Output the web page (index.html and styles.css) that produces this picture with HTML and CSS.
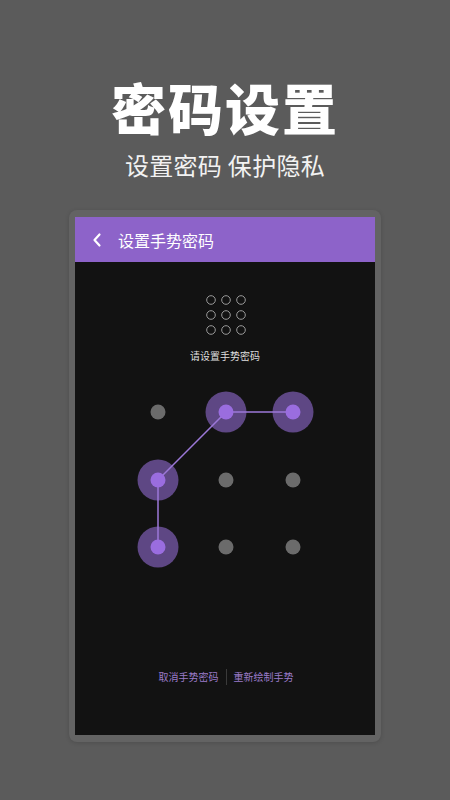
FILE: index.html
```html
<!DOCTYPE html>
<html lang="zh">
<head>
<meta charset="utf-8">
<link rel="stylesheet" href="styles.css">
</head>
<body>
<div class="page">
  <h1 class="title">密码设置</h1>
  <p class="subtitle">设置密码 保护隐私</p>
  <div class="frame">
    <div class="screen">
      <div class="appbar">
        <svg class="back" width="12" height="16" viewBox="0 0 12 16"><path d="M8.5 2.5 L3.5 8 L8.5 13.5" fill="none" stroke="#fff" stroke-width="2.2" stroke-linecap="round" stroke-linejoin="round"/></svg>
        <span class="appbar-title">设置手势密码</span>
      </div>
      <div class="content">
        <svg class="mini" width="40" height="40" viewBox="0 0 40 40">
          <g fill="none" stroke="#9a9a9a" stroke-width="1">
            <circle cx="5" cy="5" r="4.3"/><circle cx="20" cy="5" r="4.3"/><circle cx="35" cy="5" r="4.3"/>
            <circle cx="5" cy="20" r="4.3"/><circle cx="20" cy="20" r="4.3"/><circle cx="35" cy="20" r="4.3"/>
            <circle cx="5" cy="35" r="4.3"/><circle cx="20" cy="35" r="4.3"/><circle cx="35" cy="35" r="4.3"/>
          </g>
        </svg>
        <p class="hint">请设置手势密码</p>
        <svg class="pattern" width="300" height="190" viewBox="0 0 300 190">
          <g fill="#5e4784">
            <circle cx="151" cy="27" r="20.5"/>
            <circle cx="218" cy="27" r="20.5"/>
            <circle cx="83" cy="95" r="20.5"/>
            <circle cx="83" cy="162" r="20.5"/>
          </g>
          <polyline points="218,27 151,27 83,95 83,162" fill="none" stroke="#9c78d8" stroke-width="1.5"/>
          <g fill="#6b6b6b">
            <circle cx="83" cy="27" r="7.5"/>
            <circle cx="151" cy="95" r="7.5"/>
            <circle cx="218" cy="95" r="7.5"/>
            <circle cx="151" cy="162" r="7.5"/>
            <circle cx="218" cy="162" r="7.5"/>
          </g>
          <g fill="#9a6ddf">
            <circle cx="151" cy="27" r="7.5"/>
            <circle cx="218" cy="27" r="7.5"/>
            <circle cx="83" cy="95" r="7.5"/>
            <circle cx="83" cy="162" r="7.5"/>
          </g>
        </svg>
        <div class="actions">
          <span class="action">取消手势密码</span>
          <span class="divider"></span>
          <span class="action">重新绘制手势</span>
        </div>
      </div>
    </div>
  </div>
</div>
</body>
</html>
```

FILE: styles.css
```css
* { box-sizing: border-box; }
html, body {
  margin: 0;
  padding: 0;
  width: 450px;
  height: 800px;
  overflow: hidden;
  background: #5b5b5b;
  font-family: "Noto Sans CJK SC", "Noto Sans", sans-serif;
}
.page {
  display: flex;
  flex-direction: column;
  align-items: center;
  padding-top: 74px;
}
.title {
  margin: 0;
  font-size: 55px;
  line-height: 64px;
  font-weight: 900;
  color: #ffffff;
  letter-spacing: 2px;
}
.subtitle {
  margin: 12px 0 0;
  font-size: 24px;
  line-height: 30px;
  color: #f2f2f2;
  font-weight: 400;
  letter-spacing: 0.3px;
}
.frame {
  margin-top: 30px;
  width: 312px;
  padding: 7px 6px 7px 6px;
  background: #636363;
  border-radius: 8px;
  box-shadow: 0 1px 4px rgba(0,0,0,0.15);
}
.screen {
  width: 300px;
  height: 518px;
  background: #121212;
  display: flex;
  flex-direction: column;
}
.appbar {
  height: 45px;
  background: #8d63c9;
  display: flex;
  align-items: center;
  padding-left: 16px;
  gap: 15px;
}
.back { display: block; }
.appbar-title {
  color: #ffffff;
  font-size: 16px;
  line-height: 20px;
}
.content {
  display: flex;
  flex-direction: column;
  align-items: center;
}
.mini {
  display: block;
  margin-top: 33px;
  margin-left: 2px;
}
.hint {
  margin: 14px 0 0;
  font-size: 10px;
  line-height: 14px;
  color: #dedede;
}
.pattern {
  display: block;
  margin-top: 22px;
}
.actions {
  margin-top: 94px;
  display: flex;
  align-items: center;
  gap: 7px;
  margin-left: 2px;
}
.action {
  font-size: 10px;
  line-height: 14px;
  color: #9a7bc9;
}
.divider {
  width: 1px;
  height: 16px;
  background: #3a3a3a;
}
```
